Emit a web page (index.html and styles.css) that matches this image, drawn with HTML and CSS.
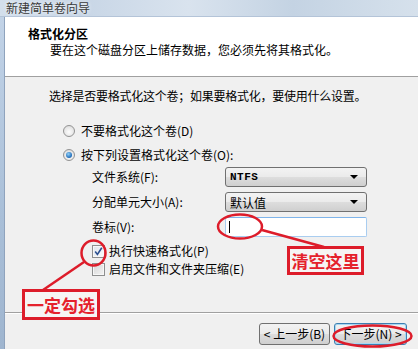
FILE: index.html
```html
<!DOCTYPE html>
<html lang="zh-CN">
<head>
<meta charset="utf-8">
<title>新建简单卷向导</title>
<link rel="stylesheet" href="styles.css">
</head>
<body>
<div class="screen">
  <div class="titlebar"><span class="title">新建简单卷向导</span></div>
  <div class="main">
    <div class="frame-left"></div>
    <div class="dialog">
      <div class="header">
        <div class="h-title">格式化分区</div>
        <div class="h-sub">要在这个磁盘分区上储存数据，您必须先将其格式化。</div>
      </div>
      <div class="body">
        <p class="intro">选择是否要格式化这个卷；如果要格式化，要使用什么设置。</p>
        <div class="options">
          <div class="radio-row"><span class="radio"></span><span>不要格式化这个卷(D)</span></div>
          <div class="radio-row"><span class="radio checked"></span><span>按下列设置格式化这个卷(O):</span></div>
        </div>
        <div class="form">
          <span class="flabel">文件系统(F):</span>
          <div class="select"><span class="mono">NTFS</span><span class="arrow"></span></div>
          <span class="flabel">分配单元大小(A):</span>
          <div class="select"><span>默认值</span><span class="arrow"></span></div>
          <span class="flabel">卷标(V):</span>
          <div class="input"><span class="caret"></span></div>
        </div>
        <div class="checks">
          <div class="check-row"><span class="checkbox checked"><svg viewBox="0 0 11 11" width="11" height="11"><path d="M2.2 5.6 L4.4 8.4 L8.8 1.8" fill="none" stroke="#2b4f8f" stroke-width="1.6"/></svg></span><span>执行快速格式化(P)</span></div>
          <div class="check-row"><span class="checkbox"></span><span>启用文件和文件夹压缩(E)</span></div>
        </div>
      </div>
      <div class="footer">
        <button class="btn">&lt; 上一步(B)</button>
        <button class="btn focus">下一步(N) &gt;</button>
      </div>
    </div>
  </div>

  <svg class="marks" width="418" height="349" viewBox="0 0 418 349">
    <ellipse cx="240" cy="226.5" rx="22" ry="12" fill="none" stroke="#dd1c2a" stroke-width="2.5"/>
    <line x1="262" y1="230" x2="324" y2="247" stroke="#dd1c2a" stroke-width="2.5"/>
    <ellipse cx="93.5" cy="253" rx="12" ry="12.5" fill="none" stroke="#dd1c2a" stroke-width="2.5"/>
    <line x1="84" y1="262" x2="43" y2="290" stroke="#dd1c2a" stroke-width="2.5"/>
    <ellipse cx="372.5" cy="336" rx="39" ry="10.5" fill="none" stroke="#dd1c2a" stroke-width="2.5"/>
  </svg>
  <div class="note note-clear">清空这里</div>
  <div class="note note-check">一定勾选</div>
</div>
</body>
</html>
```

FILE: styles.css
```css
* { box-sizing: border-box; }
html, body { margin: 0; padding: 0; }
body {
  width: 418px;
  height: 349px;
  overflow: hidden;
  font-family: "Noto Sans CJK SC", "Liberation Sans", sans-serif;
  font-size: 12px;
  color: #000;
}
.screen {
  position: relative;
  width: 418px;
  height: 349px;
  display: flex;
  flex-direction: column;
  background: #f0f0f0;
}
.titlebar {
  height: 17px;
  padding-top: 1px;
  background: linear-gradient(90deg, #d3dfec 0%, #c8d6e6 20%, #d9e3ee 45%, #c4d3e3 70%, #d6e1ec 100%);
  border-bottom: 1px solid #b4c4d8;
}
.title {
  display: block;
  margin-left: 6px;
  line-height: 14px;
  font-size: 12px;
  color: #3a3a3a;
  text-shadow: 0 0 4px #fff;
}
.main {
  flex: 1;
  display: flex;
  min-height: 0;
}
.frame-left {
  width: 5px;
  background: linear-gradient(180deg, #c2d3e7, #a9bfd8 60%, #9fb5cf);
  border-right: 1px solid #8fa3bd;
}
.dialog {
  flex: 1;
  display: flex;
  flex-direction: column;
  background: #f0f0f0;
}
.header {
  height: 60px;
  background: #fff;
  border-bottom: 1px solid #a0a0a0;
  padding: 10px 0 0 23px;
}
.h-title {
  font-weight: bold;
  line-height: 14px;
  font-size: 12px;
}
.h-sub {
  margin-top: 2px;
  padding-left: 22px;
  line-height: 14px;
}
.body {
  height: 235px;
  padding: 12px 0 0 44px;
}
.intro {
  margin: 0;
  line-height: 14px;
  letter-spacing: -0.25px;
}
.options {
  margin-top: 21px;
  margin-left: 14px;
  display: flex;
  flex-direction: column;
  gap: 10px;
}
.radio-row, .check-row {
  display: flex;
  align-items: center;
  gap: 6px;
  height: 14px;
  line-height: 14px;
}
.radio {
  width: 12px;
  height: 12px;
  border-radius: 50%;
  border: 1px solid #939393;
  background: radial-gradient(circle at 50% 60%, #fdfdfd 0%, #e6e6e6 60%, #d2d2d2 100%);
  display: flex;
  align-items: center;
  justify-content: center;
}
.radio.checked::after {
  content: "";
  width: 6px;
  height: 6px;
  border-radius: 50%;
  background: radial-gradient(circle at 40% 35%, #8fd0f8, #1f6ab7 70%, #154f8c);
}
.form {
  margin-top: 5px;
  margin-left: 43px;
  display: grid;
  grid-template-columns: 133px 142px;
  grid-auto-rows: 20px;
  row-gap: 5px;
  align-items: center;
}
.flabel {
  line-height: 14px;
}
.select {
  height: 20px;
  border: 1px solid #707070;
  border-radius: 3px;
  background: linear-gradient(180deg, #f3f3f3 0%, #ebebeb 48%, #dddddd 52%, #cfcfcf 100%);
  display: flex;
  align-items: center;
  justify-content: space-between;
  padding: 0 8px 0 4px;
}
.mono {
  font-family: "Liberation Mono", monospace;
  font-weight: bold;
  font-size: 11px;
  letter-spacing: 0.5px;
}
.arrow {
  width: 0;
  height: 0;
  border-left: 4px solid transparent;
  border-right: 4px solid transparent;
  border-top: 4px solid #000;
}
.input {
  height: 20px;
  border: 1px solid #a9cdf0;
  border-top-color: #7eb4ea;
  border-radius: 2px;
  background: #fff;
  display: flex;
  align-items: center;
  padding-left: 3px;
}
.caret {
  width: 1px;
  height: 12px;
  background: #000;
}
.checks {
  margin-top: 7px;
  margin-left: 43px;
  display: flex;
  flex-direction: column;
  gap: 4px;
}
.check-row { gap: 4px; }
.checkbox {
  width: 13px;
  height: 13px;
  border: 1px solid #8e8f8f;
  background: linear-gradient(135deg, #d6d6d6, #f4f4f4);
  box-shadow: inset 0 0 0 1px #f7f7f7;
  display: flex;
  align-items: center;
  justify-content: center;
}
.checkbox.checked { background: linear-gradient(135deg, #dfe5ec, #fafafa); }
.footer {
  flex: 1;
  border-top: 1px solid #a0a0a0;
  box-shadow: inset 0 1px 0 #fff;
  display: flex;
  justify-content: flex-end;
  align-items: flex-start;
  gap: 4px;
  padding: 10px 11px 0 0;
}
.btn {
  width: 71px;
  height: 22px;
  border: 1px solid #707070;
  border-radius: 3px;
  background: linear-gradient(180deg, #f2f2f2 0%, #ebebeb 48%, #dddddd 52%, #cfcfcf 100%);
  font-family: "Noto Sans CJK SC", "Liberation Sans", sans-serif;
  font-size: 12px;
  color: #000;
  padding: 0;
  line-height: 18px;
}
.btn.focus {
  width: 73px;
  border-color: #3c7fb1;
  box-shadow: inset 0 0 0 1px #a7d8f3;
}
.marks {
  position: absolute;
  left: 0;
  top: 0;
  pointer-events: none;
}
.note {
  position: absolute;
  border: 3px solid #dd1c2a;
  background: #f6f4f4;
  color: #e5212c;
  font-weight: bold;
  font-size: 17px;
  line-height: 23px;
  text-align: center;
}
.note-clear {
  left: 287px;
  top: 246px;
  width: 77px;
  height: 29px;
}
.note-check {
  left: 22px;
  top: 289px;
  width: 78px;
  height: 31px;
  line-height: 25px;
}
```
